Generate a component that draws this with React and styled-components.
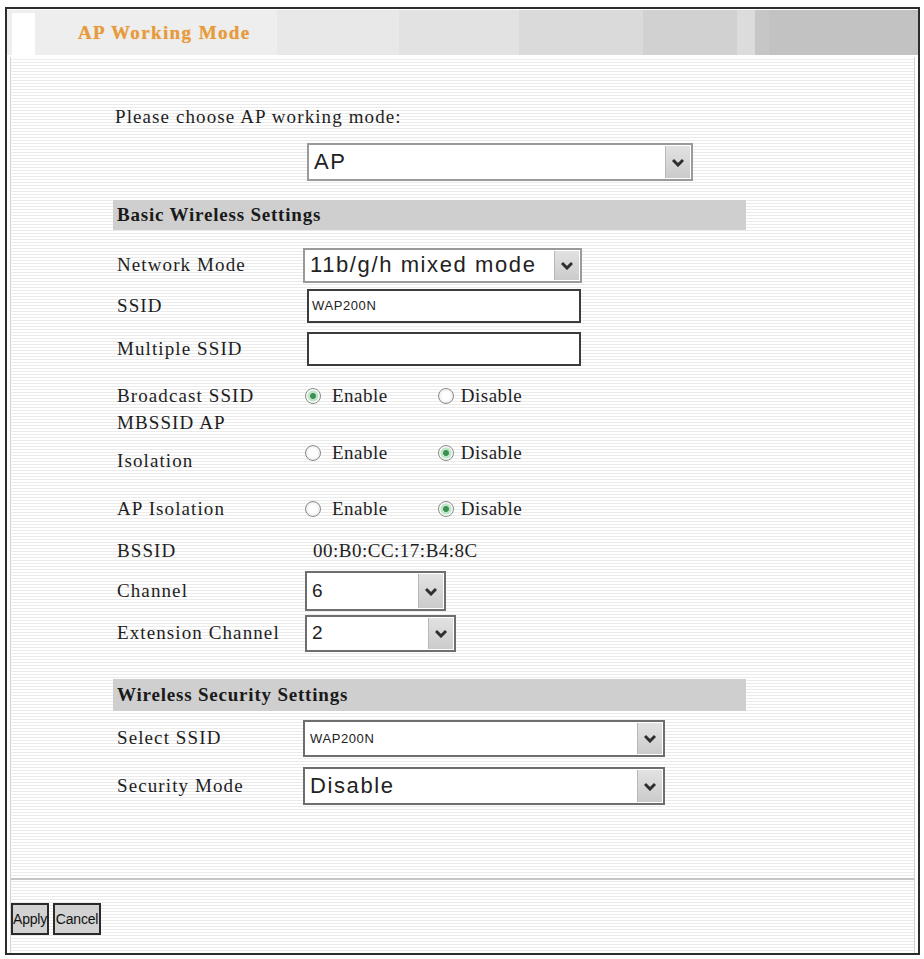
import React from 'react'
import styled, { createGlobalStyle } from 'styled-components'

const GlobalStyle = createGlobalStyle`
  html, body {
    margin: 0;
    background: #fff;
    font-family: "Liberation Serif", "Times New Roman", serif;
    color: #1e1e1e;
  }
`

const Frame = styled.div`
  box-sizing: border-box;
  margin: 7px 4px 0 5px;
  height: 948px;
  border: 2px solid #2c2c2c;
  display: flex;
  flex-direction: column;
`

// stepped grey band behind the page title
const TitleBar = styled.div`
  margin-top: 1px;
  height: 45px;
  display: flex;
  align-items: stretch;
  background: linear-gradient(
    to right,
    #eeeeee 0 270px,
    #e8e8e8 270px 392px,
    #e2e2e2 392px 512px,
    #dadada 512px 636px,
    #d1d1d1 636px 730px,
    #dcdcdc 730px 748px,
    #c6c6c6 748px 762px,
    #c2c2c2 762px
  );
`

const TitleNotch = styled.div`
  width: 23px;
  margin: 3px 0 0 5px;
  background: #fff;
`

const Title = styled.h1`
  margin: 0 0 0 43px;
  align-self: center;
  font-size: 19px;
  font-weight: 700;
  letter-spacing: 1.4px;
  color: #e69a3c;
  text-shadow: 0 0 1px rgba(230, 150, 60, 0.5);
`

const Body = styled.div`
  flex: 1;
  margin: 2px 3px 0 3px;
  border-left: 1px solid #d4d4d4;
  border-right: 1px solid #d4d4d4;
  display: flex;
  flex-direction: column;
  background: repeating-linear-gradient(
    to bottom,
    #ffffff 0 2px,
    #ebebeb 2px 3px
  );
`

const Form = styled.div`
  width: 633px;
  margin: 40px 0 0 102px;
`

const Prompt = styled.div`
  height: 40px;
  line-height: 40px;
  padding-left: 2px;
  font-size: 19px;
  letter-spacing: 1.1px;
`

const ModeRow = styled.div`
  margin: 6px 0 0 194px;
`

const SectionBar = styled.div`
  margin-top: ${({ top }) => top}px;
  height: ${({ h }) => h}px;
  line-height: ${({ h }) => h}px;
  padding-left: 4px;
  background: #cfcfcf;
  font-size: 19px;
  font-weight: 700;
  letter-spacing: 0.8px;
  color: #1a1a1a;
`

const Rows = styled.div`
  margin-top: ${({ top }) => top}px;
`

const Row = styled.div`
  height: ${({ h }) => h}px;
  display: grid;
  grid-template-columns: 190px 1fr;
  grid-template-rows: ${({ h }) => h}px;
  align-items: center;
`

// a two-line label sits a little above the controls beside it
const Label = styled.div`
  padding-left: 4px;
  font-size: 19px;
  letter-spacing: 1.1px;
  line-height: ${({ tall }) => (tall ? '38px' : '24px')};
  margin-bottom: ${({ tall }) => (tall ? 22 : 0)}px;
`

const Value = styled.div`
  display: flex;
  align-items: center;
  font-size: 19px;
  letter-spacing: 0.5px;
  padding-left: ${({ inset }) => inset || 0}px;
`

const SelectBox = styled.div`
  box-sizing: border-box;
  width: ${({ w }) => w}px;
  height: ${({ h }) => h}px;
  border: 2px solid ${({ dark }) => (dark ? '#6e6e6e' : '#9a9a9a')};
  background: #fff;
  display: flex;
  align-items: stretch;
`

const SelectText = styled.div`
  flex: 1;
  display: flex;
  align-items: center;
  padding-left: 5px;
  font-family: "Liberation Sans", Arial, sans-serif;
  font-size: ${({ size }) => size}px;
  letter-spacing: ${({ size }) => (size > 16 ? 1.6 : 0.6)}px;
  color: #222;
`

const ArrowButton = styled.div`
  width: 24px;
  margin: 1px;
  display: flex;
  align-items: center;
  justify-content: center;
  background: linear-gradient(to bottom, #e2e2e2, #cbcbcb);
  border-left: 1px solid #b8b8b8;
`

const TextInput = styled.div`
  box-sizing: border-box;
  width: 274px;
  height: 34px;
  border: 2px solid #3c3c3c;
  background: #fff;
  display: flex;
  align-items: center;
  padding-left: 3px;
  font-family: "Liberation Sans", Arial, sans-serif;
  font-size: 13px;
  letter-spacing: 0.6px;
  color: #222;
`

const Option = styled.label`
  display: flex;
  align-items: center;
  margin-right: ${({ spread }) => spread}px;
`

const RadioDot = styled.span`
  box-sizing: border-box;
  width: 16px;
  height: 16px;
  border-radius: 50%;
  border: 1px solid #8a8a8a;
  background: ${({ checked }) =>
    checked
      ? 'radial-gradient(circle, #3d8f55 0 2.5px, #bfe6c6 3.5px 5px, #fafafa 6px)'
      : 'radial-gradient(circle, #ffffff 0 4px, #ececec 7px)'};
  margin-right: ${({ gap }) => gap}px;
`

const Footer = styled.div`
  margin-top: auto;
  height: 73px;
  border-top: 2px solid #c6c6c6;
`

const Buttons = styled.div`
  display: flex;
  gap: 4px;
  margin-top: 23px;
`

const Button = styled.button`
  box-sizing: border-box;
  width: ${({ w }) => w}px;
  height: 32px;
  padding: 0;
  border: 2px solid #2a2a2a;
  background: #d2d2d2;
  font-family: "Liberation Sans", Arial, sans-serif;
  font-size: 14px;
  letter-spacing: -0.2px;
  color: #111;
`

const Chevron = () => (
  <svg width="12" height="9" viewBox="0 0 12 9">
    <path d="M1 2 L6 7 L11 2" fill="none" stroke="#2e2e2e" strokeWidth="3" strokeLinejoin="miter" />
  </svg>
)

const Select = ({ value, w, h, size = 22, dark }) => (
  <SelectBox w={w} h={h} dark={dark}>
    <SelectText size={size}>{value}</SelectText>
    <ArrowButton>
      <Chevron />
    </ArrowButton>
  </SelectBox>
)

const RadioPair = ({ enabled }) => (
  <>
    <Option spread={50}>
      <RadioDot checked={enabled} gap={11} />
      Enable
    </Option>
    <Option spread={0}>
      <RadioDot checked={!enabled} gap={7} />
      Disable
    </Option>
  </>
)

const basicRows = [
  { label: 'Network Mode', h: 40, field: <Select value="11b/g/h mixed mode" w={279} h={35} /> },
  { label: 'SSID', h: 41, field: <TextInput>WAP200N</TextInput>, inset: 4 },
  { label: 'Multiple SSID', h: 46, field: <TextInput />, inset: 4 },
  { label: 'Broadcast SSID', h: 47, field: <RadioPair enabled />, inset: 2 },
  { label: ['MBSSID AP', 'Isolation'], h: 68, field: <RadioPair />, inset: 2 },
  { label: 'AP Isolation', h: 44, field: <RadioPair />, inset: 2 },
  { label: 'BSSID', h: 39, field: '00:B0:CC:17:B4:8C', inset: 10 },
  { label: 'Channel', h: 42, field: <Select value="6" w={141} h={40} size={19} dark />, inset: 2 },
  { label: 'Extension Channel', h: 42, field: <Select value="2" w={151} h={37} size={19} dark />, inset: 2 },
]

const securityRows = [
  { label: 'Select SSID', h: 50, field: <Select value="WAP200N" w={362} h={37} size={13} dark /> },
  { label: 'Security Mode', h: 46, field: <Select value="Disable" w={362} h={38} dark /> },
]

const SettingsRows = ({ rows, top }) => (
  <Rows top={top}>
    {rows.map(({ label, h, field, inset }) => {
      const tall = Array.isArray(label)
      return (
        <Row h={h} key={tall ? label.join(' ') : label}>
          <Label tall={tall}>
            {tall ? label.map((line) => <div key={line}>{line}</div>) : label}
          </Label>
          <Value inset={inset}>{field}</Value>
        </Row>
      )
    })}
  </Rows>
)

export default function App() {
  return (
    <>
      <GlobalStyle />
      <Frame>
        <TitleBar>
          <TitleNotch />
          <Title>AP Working Mode</Title>
        </TitleBar>
        <Body>
          <Form>
            <Prompt>Please choose AP working mode:</Prompt>
            <ModeRow>
              <Select value="AP" w={386} h={38} />
            </ModeRow>
            <SectionBar top={19} h={30}>Basic Wireless Settings</SectionBar>
            <SettingsRows rows={basicRows} top={15} />
            <SectionBar top={25} h={32}>Wireless Security Settings</SectionBar>
            <SettingsRows rows={securityRows} top={2} />
          </Form>
          <Footer>
            <Buttons>
              <Button w={38}>Apply</Button>
              <Button w={48}>Cancel</Button>
            </Buttons>
          </Footer>
        </Body>
      </Frame>
    </>
  )
}
